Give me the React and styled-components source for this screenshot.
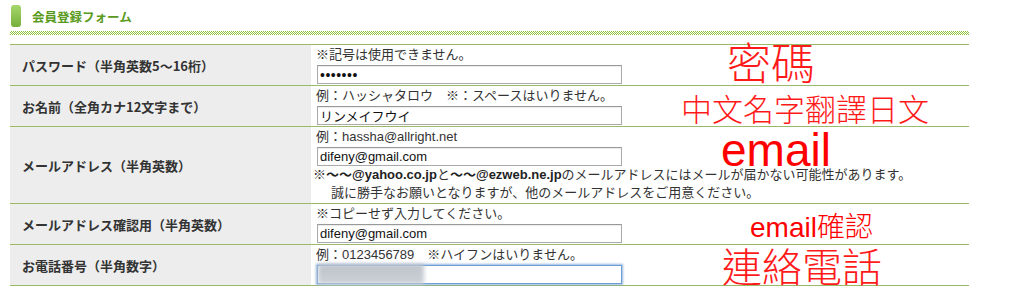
import React from 'react'
import styled, { createGlobalStyle } from 'styled-components'

const GlobalStyle = createGlobalStyle`
    body {
        margin: 0;
        background: #fff;
        font-family: "Liberation Sans", "Noto Sans CJK JP", sans-serif;
        color: #333;
    }
`
const Page = styled.div`
    position: relative;
    width: 959px;
    padding-left: 10px;
`
const Heading = styled.div`
    display: flex;
    align-items: center;
    gap: 11px;
    height: 22px;
    padding: 5px 0 4px 1px;
`
const Marker = styled.span`
    width: 10px;
    height: 22px;
    border-radius: 3px;
    background: linear-gradient(#a6d86c, #76ae3a);
`
const HeadingText = styled.h2`
    margin: 0;
    font-size: 12.5px;
    font-weight: 700;
    color: #5a9a20;
    font-family: "Noto Sans CJK JP", sans-serif;
`
const Dots = styled.div`
    height: 4px;
    background: repeating-conic-gradient(#8cc441 0 25%, #fff 0 50%) 0 0 / 2px 2px;
    margin-bottom: 9px;
`
const Table = styled.table`
    width: 100%;
    border-collapse: collapse;
`
const Row = styled.tr`
    border-top: 1px solid #9bba68;
    border-bottom: 1px solid #9bba68;
`
const Label = styled.th`
    width: 289px;
    background: #ededed;
    text-align: left;
    padding: 0 0 0 12px;
    font-size: 13px;
    font-weight: 700;
    color: #333;
    font-family: "Noto Sans CJK JP", sans-serif;
    vertical-align: middle;
`
const Cell = styled.td`
    padding: 2px 0 1px 5px;
    vertical-align: top;
`
const Note = styled.div`
    font-size: 13px;
    line-height: ${p => p.$tall ? '18px' : '16px'};
    color: #333;
    margin-left: ${p => p.$shift ? '-3px' : '0'};
    padding-left: ${p => p.$indent ? '15px' : '0'};
    white-space: nowrap;
    b { font-weight: 700; color: #222; }
`
const Field = styled.input`
    box-sizing: border-box;
    display: block;
    width: 305px;
    height: 19px;
    margin: 2px 0 0 1px;
    padding: 0 2px;
    border: 1px solid #aaa;
    border-top-color: #999;
    box-shadow: inset 0 1px 1px rgba(0, 0, 0, 0.08);
    font-size: ${p => p.type === 'password' ? '14px' : '13px'};
    letter-spacing: ${p => p.type === 'password' ? '0.5px' : 'normal'};
    font-family: "Liberation Sans", "Noto Sans CJK JP", sans-serif;
    color: #111;
    outline: none;
`
const FocusWrap = styled.div`
    position: relative;
    width: 305px;
    margin: 2px 0 0 1px;
`
const FocusField = styled(Field)`
    margin: 0;
    border: 1px solid #6d9fd6;
    box-shadow: 0 0 2px 1px rgba(110, 158, 214, 0.75);
`
const Blur = styled.span`
    position: absolute;
    left: 1px;
    top: -1px;
    width: 106px;
    height: 20px;
    background: linear-gradient(#bfc4cb, #cbd0d6);
    filter: blur(2px);
`
const Scribble = styled.span`
    position: absolute;
    left: ${p => p.$x}px;
    top: ${p => p.$y}px;
    font-size: ${p => p.$size}px;
    line-height: 1;
    color: ${p => p.$latin ? '#f00' : '#ff1a1a'};
    font-weight: 300;
    font-family: ${p => p.$latin ? '"Liberation Sans", "Noto Sans CJK TC"' : '"Noto Sans CJK TC"'}, sans-serif;
    white-space: nowrap;
    pointer-events: none;
`

const App = () => {
    return (
        <Page>
            <GlobalStyle />
            <Heading>
                <Marker />
                <HeadingText>会員登録フォーム</HeadingText>
            </Heading>
            <Dots />
            <Table>
                <tbody>
                    <Row>
                        <Label>パスワード（半角英数5〜16桁）</Label>
                        <Cell>
                            <Note>※記号は使用できません。</Note>
                            <Field type="password" defaultValue="1234567" readOnly />
                        </Cell>
                    </Row>
                    <Row>
                        <Label>お名前（全角カナ12文字まで）</Label>
                        <Cell>
                            <Note>例：ハッシャタロウ　※：スペースはいりません。</Note>
                            <Field defaultValue="リンメイフウイ" readOnly />
                        </Cell>
                    </Row>
                    <Row>
                        <Label>メールアドレス（半角英数）</Label>
                        <Cell>
                            <Note>例：hassha@allright.net</Note>
                            <Field defaultValue="difeny@gmail.com" readOnly />
                            <Note $shift $tall>※<b>〜〜@yahoo.co.jp</b>と<b>〜〜@ezweb.ne.jp</b>のメールアドレスにはメールが届かない可能性があります。</Note>
                            <Note $indent $tall>誠に勝手なお願いとなりますが、他のメールアドレスをご用意ください。</Note>
                        </Cell>
                    </Row>
                    <Row>
                        <Label>メールアドレス確認用（半角英数）</Label>
                        <Cell>
                            <Note>※コピーせず入力してください。</Note>
                            <Field defaultValue="difeny@gmail.com" readOnly />
                        </Cell>
                    </Row>
                    <Row>
                        <Label>お電話番号（半角数字）</Label>
                        <Cell>
                            <Note>例：0123456789　※ハイフンはいりません。</Note>
                            <FocusWrap>
                                <FocusField defaultValue="" readOnly />
                                <Blur />
                            </FocusWrap>
                        </Cell>
                    </Row>
                </tbody>
            </Table>
            <Scribble $x={727} $y={39} $size={44}>密碼</Scribble>
            <Scribble $x={681} $y={92} $size={31}>中文名字翻譯日文</Scribble>
            <Scribble $x={721} $y={127} $size={46} $latin>email</Scribble>
            <Scribble $x={750} $y={214} $size={28} $latin>email確認</Scribble>
            <Scribble $x={722} $y={245} $size={40}>連絡電話</Scribble>
        </Page>
    )
}

export default App
